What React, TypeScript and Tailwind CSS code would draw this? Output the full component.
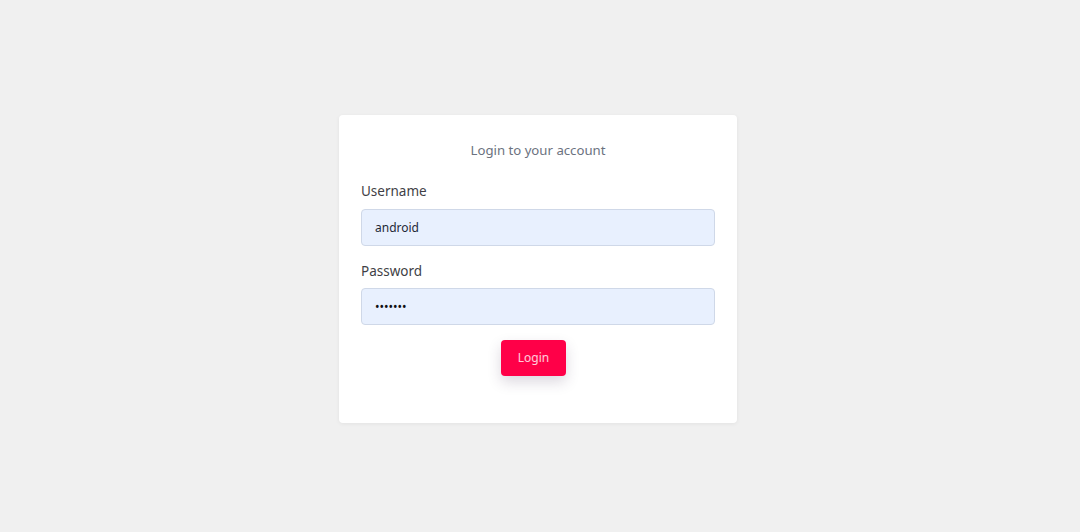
import React from 'react';

export default function App() {
  return (
    <div className="min-h-screen w-full bg-[#f0f0f0] flex items-center justify-center pt-[6px] pr-[4px] font-['Noto_Sans',sans-serif]">
      <div className="w-[398px] h-[308px] bg-white rounded-[4px] shadow-[0_1px_4px_rgba(0,0,0,0.06)] px-[22px] flex flex-col">
        {/* Title */}
        <p className="mt-[25px] text-center text-[13.2px] leading-[20px] text-[#6b7280]">
          Login to your account
        </p>

        {/* Username */}
        <label className="mt-[20px] text-[13.5px] leading-[22px] text-[#3f3f46]">Username</label>
        <input
          readOnly
          value="android"
          className="mt-[7px] h-[37px] w-full rounded-[4px] border border-[#cfd8e8] bg-[#e8f0fe] px-[13px] text-[12px] text-[#1f2937] outline-none"
        />

        {/* Password */}
        <label className="mt-[14px] text-[13.5px] leading-[22px] text-[#3f3f46]">Password</label>
        <input
          readOnly
          type="password"
          value="android"
          className="mt-[6px] h-[37px] w-full rounded-[4px] border border-[#cfd8e8] bg-[#e8f0fe] px-[13px] text-[12px] text-[#111] outline-none"
        />

        {/* Submit */}
        <div className="mt-[15px] flex justify-center pr-[9px]">
          <button className="h-[36px] w-[65px] rounded-[4px] bg-[#ff0048] text-[12px] text-white/80 shadow-[0_6px_14px_rgba(60,40,80,0.18)]">
            Login
          </button>
        </div>
      </div>
    </div>
  );
}
